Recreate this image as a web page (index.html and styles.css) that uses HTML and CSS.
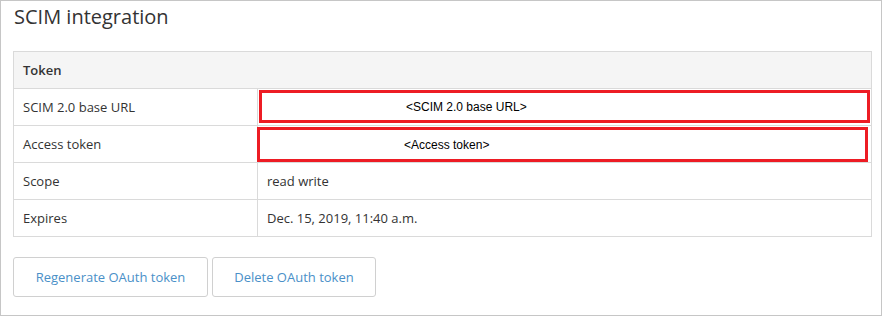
FILE: index.html
```html
<!DOCTYPE html>
<html lang="en">
<head>
    <meta charset="UTF-8">
    <title>SCIM integration</title>
    <link rel="stylesheet" href="styles.css">
</head>
<body>
    <div class="panel">
        <h2 class="title">SCIM integration</h2>

        <table class="token-table">
            <tr class="head">
                <th colspan="2">Token</th>
            </tr>
            <tr>
                <td class="label">SCIM 2.0 base URL</td>
                <td class="value">
                    <div class="mark mark-url"><span>&lt;SCIM 2.0 base URL&gt;</span></div>
                </td>
            </tr>
            <tr>
                <td class="label">Access token</td>
                <td class="value">
                    <div class="mark mark-token"><span>&lt;Access token&gt;</span></div>
                </td>
            </tr>
            <tr>
                <td class="label">Scope</td>
                <td class="value">read write</td>
            </tr>
            <tr>
                <td class="label">Expires</td>
                <td class="value">Dec. 15, 2019, 11:40 a.m.</td>
            </tr>
        </table>

        <div class="actions">
            <a href="#" class="btn btn-regen">Regenerate OAuth token</a>
            <a href="#" class="btn btn-delete">Delete OAuth token</a>
        </div>
    </div>
</body>
</html>
```

FILE: styles.css
```css
*{
    padding: 0;
    margin: 0;
    box-sizing: border-box;
}

body{
    background: #fff;
    font-family: "Open Sans", "Liberation Sans", sans-serif;
    color: #333;
}

a{
    text-decoration: none;
}

.panel{
    width: 882px;
    height: 316px;
    border: 1px solid #c6c6c6;
    padding: 0 10px 0 12px;
}

.title{
    font-size: 20px;
    font-weight: normal;
    line-height: 24px;
    margin-top: 4px;
    margin-left: 1px;
    color: #333;
}

.token-table{
    width: 859px;
    margin-top: 22px;
    border-collapse: collapse;
    font-size: 13px;
}

.token-table th,
.token-table td{
    height: 37px;
    border: 1px solid #dadada;
    padding: 0 9px;
    text-align: left;
    font-weight: normal;
}

.token-table .head th{
    background: #f5f5f5;
    font-weight: 600;
}

.token-table td.label{
    width: 244px;
}

.token-table td.value{
    position: relative;
}

.mark{
    position: absolute;
    border: 3px solid #ed1c24;
    font-family: "Liberation Sans", sans-serif;
    font-size: 12px;
    color: #000;
    display: flex;
    align-items: center;
}

.mark span{
    margin-left: 144px;
}

.mark-url{
    left: 1px;
    right: 1px;
    top: 1px;
    height: 33px;
}

.mark-token{
    left: -1px;
    right: 3px;
    top: 1px;
    height: 35px;
}

.actions{
    display: flex;
    gap: 4px;
    margin-top: 20px;
}

.btn{
    display: inline-block;
    height: 40px;
    line-height: 38px;
    border: 1px solid #d0d0d0;
    border-radius: 3px;
    font-size: 13px;
    color: #4a90c8;
    text-align: center;
}

.btn-regen{
    width: 195px;
}

.btn-delete{
    width: 164px;
}
```
